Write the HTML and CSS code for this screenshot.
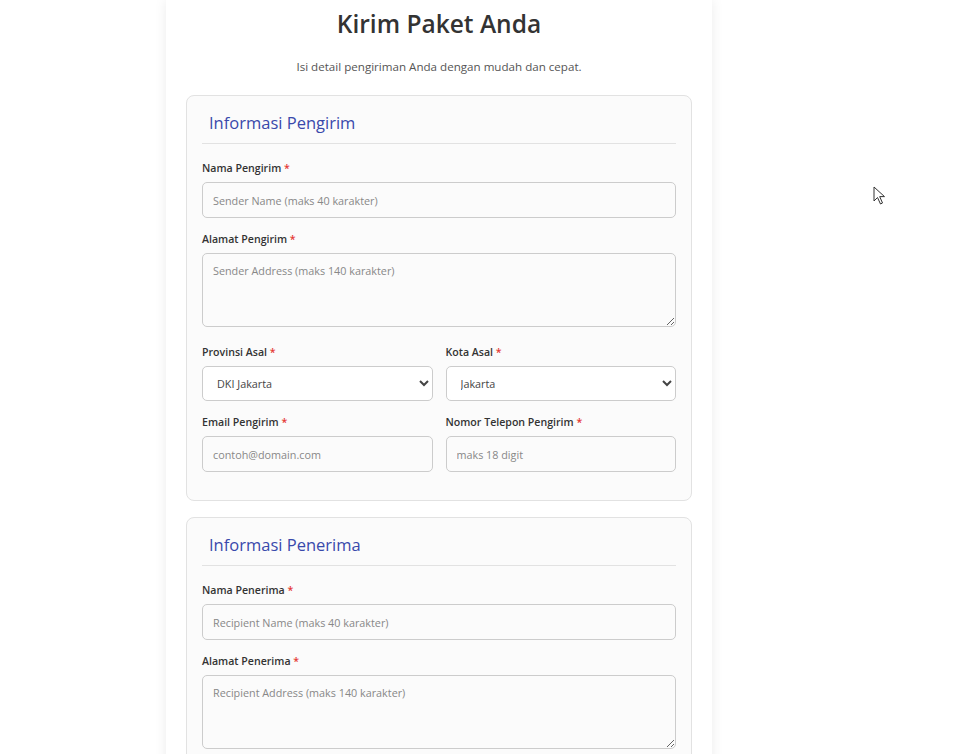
FILE: index.html
```html
<!DOCTYPE html>
<html lang="id">

<head>
  <meta charset="UTF-8" />
  <title>Kirim Paket Anda</title>
  <meta name="viewport" content="width=device-width, initial-scale=1.0" />
  <link rel="stylesheet" href="styles.css">
</head>

<body>

  <div class="container">
    <h1>Kirim Paket Anda</h1>
    <p class="subtitle">Isi detail pengiriman Anda dengan mudah dan cepat.</p>

    <form>
      <!-- pengirim -->
      <section class="section">
        <h2>Informasi Pengirim</h2>

        <div class="group">
          <label>Nama Pengirim <span class="req">*</span></label>
          <input type="text" placeholder="Sender Name (maks 40 karakter)">
        </div>

        <div class="group">
          <label>Alamat Pengirim <span class="req">*</span></label>
          <textarea placeholder="Sender Address (maks 140 karakter)"></textarea>
        </div>

        <div class="row">
          <div class="group">
            <label>Provinsi Asal <span class="req">*</span></label>
            <select>
              <option>DKI Jakarta</option>
            </select>
          </div>
          <div class="group">
            <label>Kota Asal <span class="req">*</span></label>
            <select>
              <option>Jakarta</option>
            </select>
          </div>
        </div>

        <div class="row">
          <div class="group">
            <label>Email Pengirim <span class="req">*</span></label>
            <input type="email" placeholder="contoh@domain.com">
          </div>
          <div class="group">
            <label>Nomor Telepon Pengirim <span class="req">*</span></label>
            <input type="text" placeholder="maks 18 digit">
          </div>
        </div>
      </section>

      <!-- penerima -->
      <section class="section">
        <h2>Informasi Penerima</h2>

        <div class="group">
          <label>Nama Penerima <span class="req">*</span></label>
          <input type="text" placeholder="Recipient Name (maks 40 karakter)">
        </div>

        <div class="group">
          <label>Alamat Penerima <span class="req">*</span></label>
          <textarea placeholder="Recipient Address (maks 140 karakter)"></textarea>
        </div>
      </section>
    </form>
  </div>

  <div class="cursor">
    <svg width="14" height="20" viewBox="0 0 14 20">
      <path d="M1 1 L1 15 L4.5 11.5 L7.5 18 L9.5 17 L6.7 10.6 L11.5 10.6 Z" fill="#fff" stroke="#333" stroke-width="1" stroke-linejoin="round" />
    </svg>
  </div>

</body>

</html>
```

FILE: styles.css
```css
/* ─── BASE ───────────────────────────────────────────────────────── */
* {
  box-sizing: border-box;
}

html,
body {
  margin: 0;
  padding: 0;
  background: #fff;
  font-family: "Open Sans", "Noto Sans", sans-serif;
  color: #333;
  overflow: hidden;
}

/* ─── CONTAINER ──────────────────────────────────────────────────── */
.container {
  width: 546px;
  margin-left: 166px;
  padding: 5px 20px 20px;
  background: #fff;
  box-shadow: 0 0 12px rgba(0, 0, 0, 0.08);
  min-height: 800px;
}

h1 {
  margin: 0;
  text-align: center;
  font-size: 24.5px;
  font-weight: 600;
  color: #333;
  line-height: 38px;
}

.subtitle {
  margin: 16px 0 20px;
  text-align: center;
  font-size: 11.6px;
  color: #555;
  line-height: 16px;
}

/* ─── SECTIONS ───────────────────────────────────────────────────── */
.section {
  background: #fbfbfb;
  border: 1px solid #e2e2e2;
  border-radius: 8px;
  padding: 14px 15px 15px;
  margin-bottom: 16px;
}

.section h2 {
  margin: 0 0 16px;
  padding: 0 7px 7px;
  font-size: 16.5px;
  font-weight: 500;
  color: #3949ab;
  line-height: 26px;
  border-bottom: 1px solid #e2e2e2;
}

/* ─── FORM FIELDS ────────────────────────────────────────────────── */
.group {
  margin-bottom: 13px;
}

.row {
  display: grid;
  grid-template-columns: 1fr 1fr;
  gap: 13px;
}

label {
  display: block;
  font-size: 10.6px;
  font-weight: 600;
  line-height: 17px;
  margin-bottom: 5px;
  color: #333;
}

.req {
  color: #e53935;
}

input,
textarea,
select {
  display: block;
  width: 100%;
  font-family: inherit;
  font-size: 10.8px;
  color: #444;
  background: #fbfbfb;
  border: 1px solid #ccc;
  border-radius: 5px;
  padding: 0 10px;
}

input {
  height: 36px;
}

select {
  height: 35px;
  padding: 0 6px 0 10px;
  background: #fff;
}

textarea {
  height: 74px;
  padding: 9px 10px;
  resize: vertical;
  margin-bottom: 17px;
}

::placeholder {
  color: #888;
}

/* ─── CURSOR ─────────────────────────────────────────────────────── */
.cursor {
  position: absolute;
  left: 873px;
  top: 186px;
}
```
